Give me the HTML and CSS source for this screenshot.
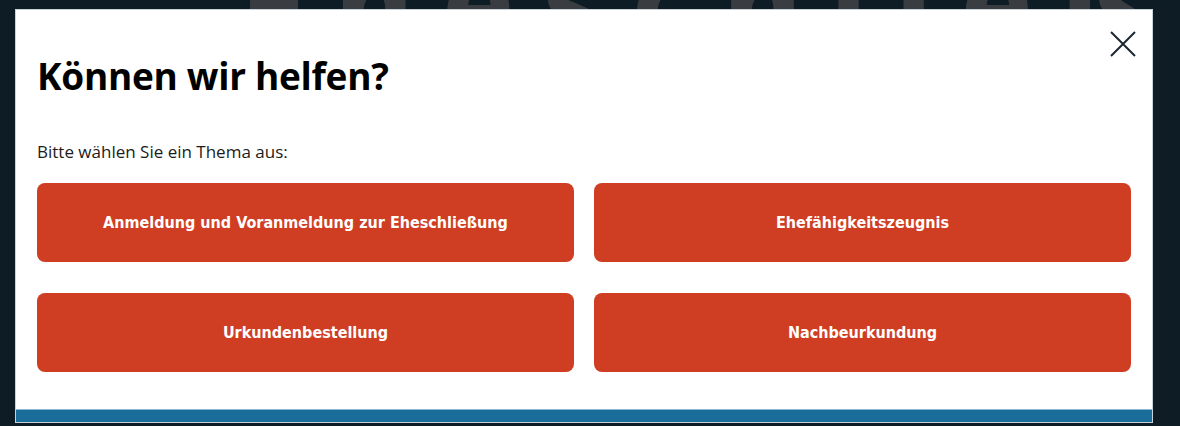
FILE: index.html
```html
<!doctype html>
<html lang="de">

<head>
	<meta charset="UTF-8" />
	<meta name="viewport" content="width=device-width, initial-scale=1.0" />
	<title>Können wir helfen?</title>
	<link rel="stylesheet" href="styles.css">
</head>

<body>
	<div class="page">
		<h1 class="page-title">Eheschließung</h1>
	</div>
	<div class="modal">
		<button class="close-btn" aria-label="Schließen">
			<svg width="26" height="26" viewBox="0 0 26 26">
				<path d="M1 1 L25 25 M25 1 L1 25" stroke="#1c2730" stroke-width="2" fill="none" />
			</svg>
		</button>
		<div class="modal-body">
			<h2>Können wir helfen?</h2>
			<p class="hint">Bitte wählen Sie ein Thema aus:</p>
			<div class="topics">
				<button class="topic-btn">Anmeldung und Voranmeldung zur Eheschließung</button>
				<button class="topic-btn">Ehefähigkeitszeugnis</button>
				<button class="topic-btn">Urkundenbestellung</button>
				<button class="topic-btn">Nachbeurkundung</button>
			</div>
		</div>
		<div class="modal-footer"></div>
	</div>
</body>

</html>
```

FILE: styles.css
```css
* {
	margin: 0;
	padding: 0;
	box-sizing: border-box;
}

body {
	font-family: "Open Sans", "Noto Sans", sans-serif;
	background-color: #0d1c25;
	height: 426px;
	overflow: hidden;
	position: relative;
}

.page {
	height: 9px;
	overflow: hidden;
	padding-left: 240px;
}

.page-title {
	font-family: "Noto Sans", sans-serif;
	font-size: 120px;
	font-weight: 800;
	color: #393d41;
	line-height: 1;
	margin-top: -60px;
	letter-spacing: 28px;
	white-space: nowrap;
}

.modal {
	position: absolute;
	top: 9px;
	left: 15px;
	width: 1138px;
	height: 414px;
	background-color: white;
	border: 1px solid #c9d4da;
	display: flex;
	flex-direction: column;
}

.modal-body {
	flex: 1;
	padding: 42px 21px 0;
}

.close-btn {
	position: absolute;
	top: 21px;
	right: 16px;
	background: none;
	border: none;
	cursor: pointer;
	display: flex;
}

h2 {
	font-size: 37px;
	font-weight: 700;
	color: #000;
	line-height: 48px;
	letter-spacing: -0.3px;
}

.hint {
	margin-top: 40px;
	font-size: 17px;
	color: #1c1c1c;
	line-height: 24px;
}

.topics {
	margin-top: 19px;
	display: grid;
	grid-template-columns: 1fr 1fr;
	column-gap: 20px;
	row-gap: 31px;
}

.topic-btn {
	height: 79px;
	background-color: #cf3d23;
	color: white;
	border: none;
	border-radius: 8px;
	font-family: "DejaVu Sans", sans-serif;
	font-stretch: condensed;
	font-size: 16px;
	font-weight: 700;
	cursor: pointer;
}

.modal-footer {
	height: 13px;
	background-color: #1a6d9b;
	border-top: 1px solid #8fb8d0;
}
```
